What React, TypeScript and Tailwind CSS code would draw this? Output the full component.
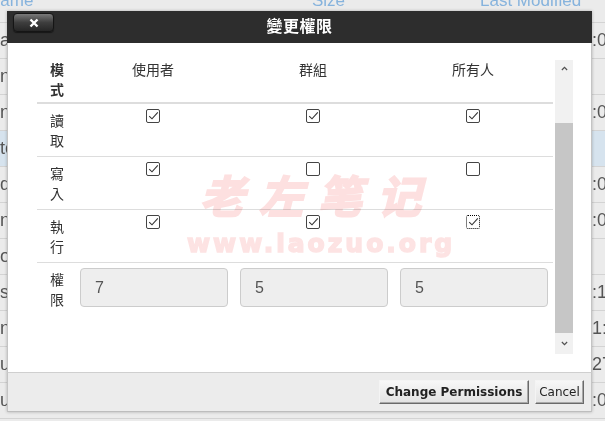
import React from "react";

const cjk = { fontFamily: '"Liberation Sans", "Noto Sans CJK TC", sans-serif' };

const bgRows: [string, string][] = [
  ["a", ":0"],
  ["n", ""],
  ["n", ":0"],
  ["tc", ""],
  ["d", ":0"],
  ["nt", ":0"],
  ["og", ""],
  ["sc", ":1"],
  ["na", "1:"],
  ["u", "27"],
  ["u", ":0"],
];

function Check({ checked, focus }: { checked: boolean; focus?: boolean }) {
  return (
    <div
      className={
        "w-[14px] h-[14px] bg-white rounded-[2px] " +
        (focus ? "border border-dotted border-[#000]" : "border border-[#444]")
      }
    >
      {checked && (
        <svg viewBox="0 0 12 12" className="w-full h-full">
          <path d="M2.2 6.2 L5 8.8 L10.8 2.4" fill="none" stroke="#333" strokeWidth="1.1" />
        </svg>
      )}
    </div>
  );
}

const rows = [
  { label: "讀取", vals: [true, true, true] },
  { label: "寫入", vals: [true, false, false] },
  { label: "執行", vals: [true, true, true] },
];

export default function App() {
  return (
    <div className="relative w-[605px] h-[421px] overflow-hidden bg-[#ebebeb]" style={cjk}>
      {/* page behind the dialog */}
      <div className="flex flex-col">
        <div className="h-[23px] border-b border-[#d3d3d3] relative text-[17px] text-[#86b3dd] leading-none">
          <span className="absolute left-[-12px] top-[-8px]">Name</span>
          <span className="absolute left-[312px] top-[-8px]">Size</span>
          <span className="absolute left-[480px] top-[-8px]">Last Modified</span>
        </div>
        {bgRows.map(([l, r], i) => (
          <div
            key={i}
            className={
              "h-[36px] border-b border-[#d3d3d3] flex items-center justify-between text-[18px] text-[#555] " +
              (i === 3 ? "bg-[#d6e3ee]" : "")
            }
          >
            <span className="whitespace-nowrap">{l}</span>
            <span className="w-[13px] whitespace-nowrap">{r}</span>
          </div>
        ))}
      </div>

      {/* dialog */}
      <div className="absolute left-[7px] top-[11px] w-[585px] h-[401px] flex flex-col shadow-[0_0_3px_rgba(0,0,0,0.25)]">
        <div className="relative h-[32px] bg-[#2d2d2d] flex items-center justify-center">
          <button className="absolute left-[6px] top-[2px] w-[41px] h-[19px] rounded-[4px] border border-[#151515] bg-gradient-to-b from-[#7a7a7a] via-[#3e3e3e] to-[#262626] shadow-[0_1px_1px_rgba(0,0,0,0.5)] flex items-center justify-center">
            <svg viewBox="0 0 10 10" className="w-[10px] h-[10px]">
              <path d="M1.5 1.5 L8.5 8.5 M8.5 1.5 L1.5 8.5" stroke="#fff" strokeWidth="2.4" />
            </svg>
          </button>
          <span className="text-white font-bold text-[16px] tracking-[0.5px]">變更權限</span>
        </div>

        <div className="flex-1 bg-white border-x border-[#c4c4c4] pl-[29px] pt-[17px] flex">
          <div className="w-[516px] h-[294px] overflow-hidden text-[14px] text-[#333] leading-[20px]">
            <div className="grid grid-cols-[36px_160px_160px_160px] border-b-2 border-[#dddddd] pb-[2px]">
              <div className="pl-[13px] font-bold">模式</div>
              <div className="text-center">使用者</div>
              <div className="text-center">群組</div>
              <div className="text-center">所有人</div>
            </div>
            {rows.map((r, ri) => (
              <div key={r.label} className="grid grid-cols-[36px_160px_160px_160px] border-b border-[#dddddd]">
                <div className="pl-[13px] pt-[7px] pb-[5px]">{r.label}</div>
                {r.vals.map((v, ci) => (
                  <div key={ci} className="flex justify-center pt-[5px]">
                    <Check checked={v} focus={ri === 2 && ci === 2} />
                  </div>
                ))}
              </div>
            ))}
            <div className="grid grid-cols-[36px_160px_160px_160px]">
              <div className="pl-[13px] pt-[7px]">權限</div>
              {["7", "5", "5"].map((n, i) => (
                <div key={i} className="pt-[5px] pl-[7px]">
                  <div className="w-[148px] h-[39px] bg-[#eeeeee] border border-[#cccccc] rounded-[4px] flex items-center pl-[14px] text-[16px] text-[#555]">
                    {n}
                  </div>
                </div>
              ))}
            </div>
          </div>

          {/* scrollbar */}
          <div className="ml-[2px] w-[18px] h-[294px] bg-[#f1f1f1] flex flex-col">
            <div className="h-[63px] flex justify-center pt-[6px]">
              <svg viewBox="0 0 8 5" className="w-[7px] h-[5px]">
                <path d="M1 4.2 L4 1.2 L7 4.2" fill="none" stroke="#505050" strokeWidth="1.4" />
              </svg>
            </div>
            <div className="h-[210px] bg-[#c6c6c6]" />
            <div className="flex-1 flex justify-center items-center">
              <svg viewBox="0 0 8 5" className="w-[7px] h-[5px]">
                <path d="M1 0.8 L4 3.8 L7 0.8" fill="none" stroke="#505050" strokeWidth="1.4" />
              </svg>
            </div>
          </div>
        </div>

        <div
          className="h-[40px] bg-[#ececec] border-t border-[#cfcfcf] border-x border-b border-x-[#c4c4c4] border-b-[#bdbdbd] flex justify-end items-start pt-[7px] pr-[7px] gap-[6px]"
          style={{ fontFamily: '"DejaVu Sans", Verdana, sans-serif' }}
        >
          <button className="h-[24px] w-[150px] bg-gradient-to-b from-[#f7f7f7] to-[#e2e2e2] border border-t-[#f4f4f4] border-l-[#f4f4f4] border-r-[#6a6a6a] border-b-[#6a6a6a] shadow-[inset_-1px_-1px_0_#a8a8a8] text-[12px] font-bold text-[#222]">
            Change Permissions
          </button>
          <button className="h-[24px] w-[49px] bg-gradient-to-b from-[#f7f7f7] to-[#e2e2e2] border border-t-[#f4f4f4] border-l-[#f4f4f4] border-r-[#6a6a6a] border-b-[#6a6a6a] shadow-[inset_-1px_-1px_0_#a8a8a8] text-[12px] text-[#222]">
            Cancel
          </button>
        </div>
      </div>

      {/* watermark */}
      <div
        className="absolute left-[200px] top-[172px] text-[44px] leading-none font-bold italic tracking-[15px] text-[#fde0e0] [-webkit-text-stroke:2px_#fde0e0] mix-blend-multiply whitespace-nowrap pointer-events-none"
        style={{ fontFamily: '"Noto Sans CJK SC", sans-serif' }}
      >
        老左笔记
      </div>
      <div
        className="absolute left-[187px] top-[231px] text-[25px] leading-none font-bold tracking-[3px] text-[#fde3e3] [-webkit-text-stroke:1.5px_#fde3e3] mix-blend-multiply whitespace-nowrap pointer-events-none"
        style={{ fontFamily: '"DejaVu Sans", sans-serif' }}
      >
        www.laozuo.org
      </div>
    </div>
  );
}
